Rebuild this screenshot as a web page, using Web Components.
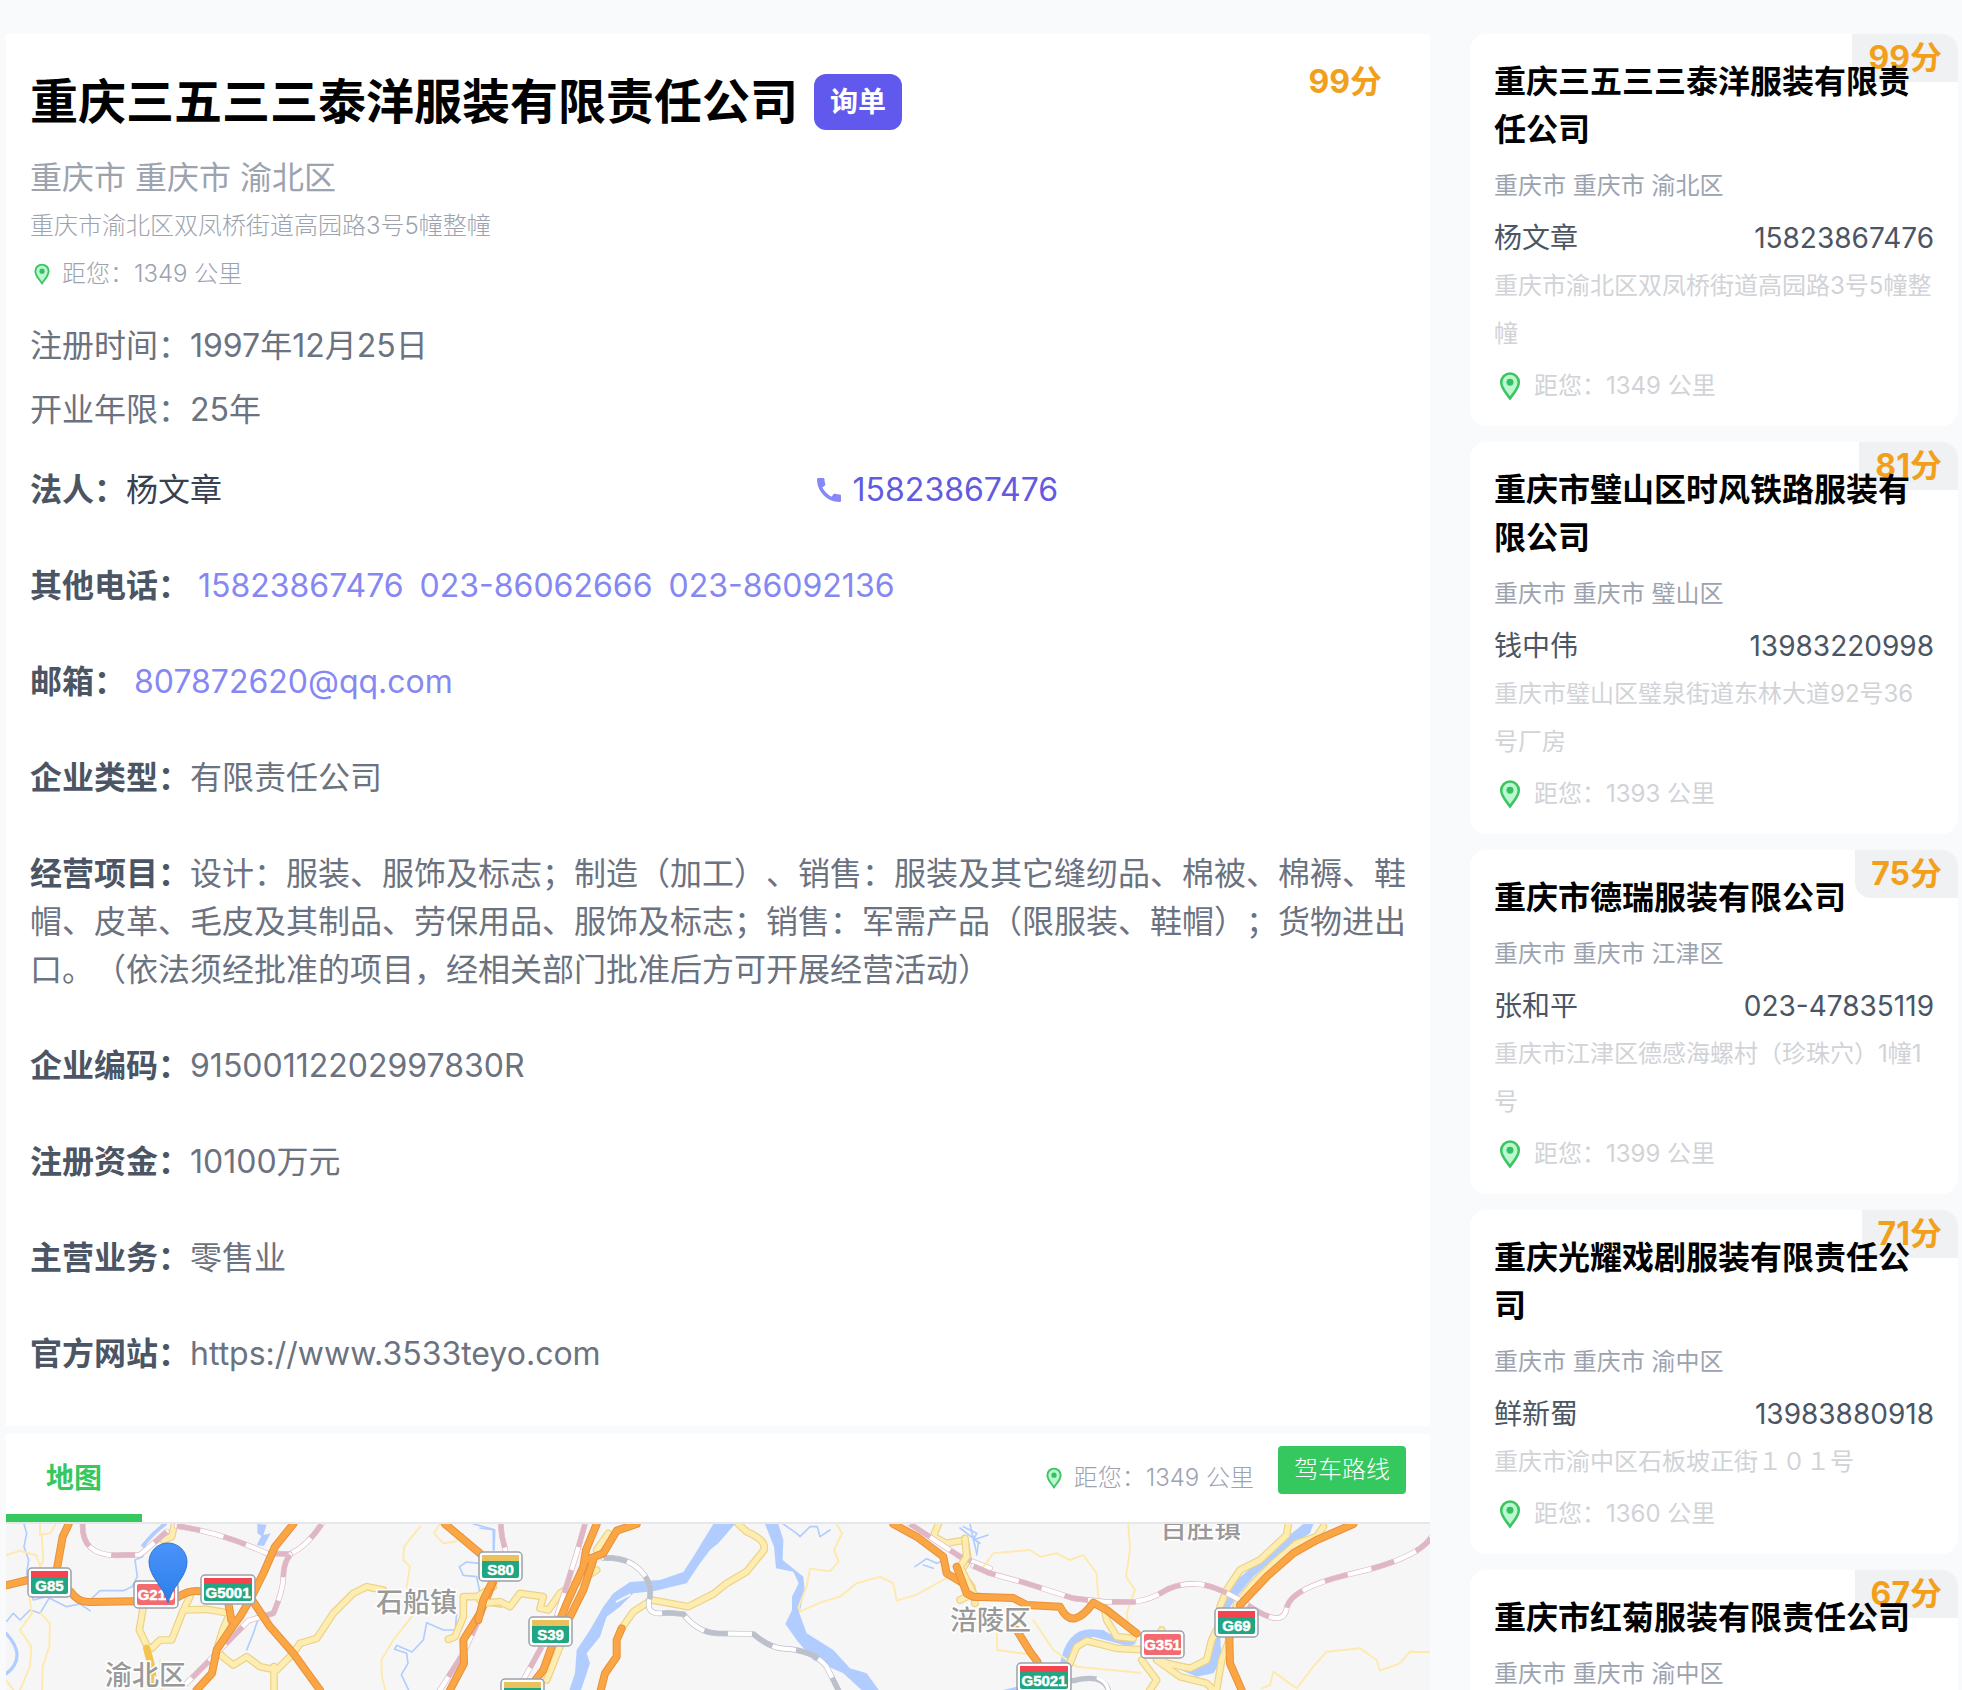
<!DOCTYPE html>
<html lang="zh-CN">
<head>
<meta charset="utf-8">
<meta name="viewport" content="width=device-width, initial-scale=1">
<title>重庆三五三三泰洋服装有限责任公司</title>
<style>
  body {
    margin: 0;
    background: #f9fafc;
    color: #6b7280;
    font-family: Inter, "Noto Sans CJK SC", sans-serif;
    font-size: 32px;
    line-height: 48px;
    text-spacing-trim: space-all;
  }
</style>
</head>
<body>
<app-layout>
  <company-panel slot="main" name="重庆三五三三泰洋服装有限责任公司" score="99" region="重庆市 重庆市 渝北区" address="重庆市渝北区双凤桥街道高园路3号5幢整幢" distance="1349">
    <span slot="facts">注册时间：1997年12月25日</span>
    <span slot="facts">开业年限：25年</span>
    <info-row label="法人" strong>杨文章<call-link slot="aside" number="15823867476"></call-link></info-row>
    <info-row label="其他电话" links><soft-link href="tel:15823867476">15823867476</soft-link><soft-link href="tel:023-86062666">023-86062666</soft-link><soft-link href="tel:023-86092136">023-86092136</soft-link></info-row>
    <info-row label="邮箱" links><soft-link href="mailto:807872620@qq.com">807872620@qq.com</soft-link></info-row>
    <info-row label="企业类型">有限责任公司</info-row>
    <info-row label="经营项目">设计：服装、服饰及标志；制造（加工）、销售：服装及其它缝纫品、棉被、棉褥、鞋帽、皮革、毛皮及其制品、劳保用品、服饰及标志；销售：军需产品（限服装、鞋帽）；货物进出口。（依法须经批准的项目，经相关部门批准后方可开展经营活动）</info-row>
    <info-row label="企业编码">91500112202997830R</info-row>
    <info-row label="注册资金">10100万元</info-row>
    <info-row label="主营业务">零售业</info-row>
    <info-row label="官方网站">https://www.3533teyo.com</info-row>
  </company-panel>
  <map-panel slot="main" distance="1349"></map-panel>

  <company-card slot="side" score="99" name="重庆三五三三泰洋服装有限责任公司" region="重庆市 重庆市 渝北区" person="杨文章" phone="15823867476" address="重庆市渝北区双凤桥街道高园路3号5幢整幢" distance="1349"></company-card>
  <company-card slot="side" score="81" name="重庆市璧山区时风铁路服装有限公司" region="重庆市 重庆市 璧山区" person="钱中伟" phone="13983220998" address="重庆市璧山区璧泉街道东林大道92号36号厂房" distance="1393"></company-card>
  <company-card slot="side" score="75" name="重庆市德瑞服装有限公司" region="重庆市 重庆市 江津区" person="张和平" phone="023-47835119" address="重庆市江津区德感海螺村（珍珠穴）1幢1号" distance="1399"></company-card>
  <company-card slot="side" score="71" name="重庆光耀戏剧服装有限责任公司" region="重庆市 重庆市 渝中区" person="鲜新蜀" phone="13983880918" address="重庆市渝中区石板坡正街１０１号" distance="1360"></company-card>
  <company-card slot="side" score="67" name="重庆市红菊服装有限责任公司" region="重庆市 重庆市 渝中区"></company-card>
</app-layout>

<script>
const define = (name, render) => customElements.define(name, class extends HTMLElement {
  connectedCallback() {
    if (this.shadowRoot) return;
    const tpl = document.createElement('template');
    tpl.innerHTML = render(key => this.getAttribute(key) || '', this);
    this.attachShadow({ mode: 'open' }).append(tpl.content.cloneNode(true));
  }
});

define('app-layout', () => `
  <style>
    :host { display: flex; align-items: flex-start; gap: 40px; height: 100vh; overflow: hidden; box-sizing: border-box; padding: 34px 4px 0 6px; }
    main { flex: 1; min-width: 0; display: flex; flex-direction: column; gap: 8px; }
    aside { flex: none; width: 488px; display: flex; flex-direction: column; gap: 16px; }
  </style>
  <main><slot name="main"></slot></main>
  <aside><slot name="side"></slot></aside>`);

define('pin-icon', () => `
  <style>:host { display: block; width: 24px; height: 24px; } svg { display: block; width: 100%; height: 100%; }</style>
  <svg viewBox="0 0 24 24" aria-hidden="true">
    <path d="M12 21.5C10.4 18.4 5.4 14.2 5.4 9.2a6.6 6.6 0 0 1 13.2 0c0 5-5 9.2-6.6 12.3z" fill="#bbf7d0" stroke="#3cc463" stroke-width="1.9" stroke-linejoin="round"/>
    <circle cx="12" cy="9.2" r="2.6" fill="#34c25f"/>
  </svg>`);

define('distance-tag', get => `
  <style>
    :host { display: flex; align-items: center; gap: 8px; font-size: 24px; }
    :host([large]) pin-icon { width: 32px; height: 32px; }
  </style>
  <pin-icon></pin-icon><span>距您：${get('km')} 公里</span>`);

define('soft-link', get => `
  <style>a { color: #8588f3; text-decoration: none; }</style>
  <a href="${get('href')}"><slot></slot></a>`);

define('call-link', get => `
  <style>
    a { display: flex; align-items: center; gap: 12px; color: #625ae0; text-decoration: none; }
    svg { width: 24px; height: 24px; fill: #8588f6; }
  </style>
  <a href="tel:${get('number')}"><svg viewBox="3 3 18 18" aria-hidden="true"><path d="M20.01 15.38c-1.23 0-2.42-.2-3.53-.56-.35-.12-.74-.03-1.01.24l-1.57 1.97c-2.83-1.35-5.48-3.9-6.89-6.83l1.95-1.66c.27-.28.35-.67.24-1.02-.37-1.11-.56-2.3-.56-3.53 0-.54-.45-.99-.99-.99H4.19C3.65 3 3 3.24 3 3.99 3 13.28 10.73 21 20.01 21c.71 0 .99-.63.99-1.18v-3.45c0-.54-.45-.99-.99-.99z"/></svg>${get('number')}</a>`);

define('info-row', (get, el) => `
  <style>
    :host { display: block; padding: 24px 0; margin-right: -4px; text-align: start; }
    b { color: #4b5563; font-weight: 700; }
    :host([strong]) { display: grid; grid-template-columns: 57% 1fr; color: #374151; }
    :host([links]) { display: flex; gap: 16px; }
    :host([links]) b { margin-right: -8px; }
  </style>
  ${el.hasAttribute('links') ? `<b>${get('label')}：</b><slot></slot>` : `<div><b>${get('label')}：</b><slot></slot></div><slot name="aside"></slot>`}`);

define('company-panel', get => `
  <style>
    :host { display: block; background: #fff; padding: 24px; }
    header { display: flex; justify-content: space-between; }
    .title { display: flex; align-items: center; gap: 16px; height: 88px; }
    h1 { margin: 0; font-size: 48px; line-height: 64px; font-weight: 700; color: #000; }
    button { font: inherit; font-size: 28px; line-height: 40px; font-weight: 700; color: #fff; background: #6159ee; border: 0; border-radius: 12px; padding: 8px 16px; }
    .score { padding-right: 24px; font-weight: 700; color: #f2a01c; }
    .region { margin-top: 8px; color: #9ca3af; }
    .address { font-size: 24px; font-weight: 300; color: #9ca3af; }
    distance-tag { font-weight: 300; color: #9ca3af; }
    .facts { display: grid; margin-top: 16px; line-height: 64px; }
  </style>
  <header>
    <div class="title"><h1>${get('name')}</h1><button type="button">询单</button></div>
    <div class="score">${get('score')}分</div>
  </header>
  <div class="region">${get('region')}</div>
  <div class="address">${get('address')}</div>
  <distance-tag km="${get('distance')}"></distance-tag>
  <div class="facts"><slot name="facts"></slot></div>
  <slot></slot>`);

define('company-card', get => `
  <style>
    :host { display: block; position: relative; background: #fff; border-radius: 16px; padding: 24px; }
    .score { position: absolute; top: 0; right: 0; padding: 0 16px; font-weight: 700; color: #f2a01c; background: #f0f1f3; border-radius: 0 16px 0 16px; }
    h2 { position: relative; margin: 0; font-size: 32px; font-weight: 700; color: #000; }
    .region { margin-top: 8px; font-size: 24px; color: #9ca3af; }
    .contact { display: flex; justify-content: space-between; margin: 8px 0 4px; font-size: 28px; line-height: 40px; color: #4b5563; }
    .contact a { color: inherit; text-decoration: none; }
    .address { font-size: 24px; color: #d1d3d7; }
    distance-tag { margin-top: 12px; line-height: 32px; color: #d1d3d7; }
  </style>
  <span class="score">${get('score')}分</span>
  <h2>${get('name')}</h2>
  <div class="region">${get('region')}</div>
  ${get('person') && `
  <div class="contact"><span>${get('person')}</span><a href="tel:${get('phone')}">${get('phone')}</a></div>
  <div class="address">${get('address')}</div>
  <distance-tag large km="${get('distance')}"></distance-tag>`}`);

define('map-panel', get => `
  <style>
    :host { display: block; background: #fff; }
    .bar { display: flex; align-items: stretch; height: 88px; padding-right: 24px; border-bottom: 2px solid #e5e7eb; }
    .tab { font: inherit; font-size: 28px; font-weight: 700; color: #34c85f; background: none; border: 0; border-bottom: 8px solid #34c85f; padding: 8px 40px 0; margin-right: auto; }
    distance-tag { font-weight: 300; color: #9ca3af; }
    .route { align-self: flex-start; margin: 12px 0 0 24px; font: inherit; font-size: 24px; font-weight: 300; line-height: 48px; color: #fff; background: #34c85f; border: 0; border-radius: 4px; padding: 0 16px; }
  </style>
  <div class="bar">
    <button class="tab" type="button">地图</button>
    <distance-tag km="${get('distance')}"></distance-tag>
    <button class="route" type="button">驾车路线</button>
  </div>
  <road-map></road-map>`);

const shield = (x, y, w, code, kind) => {
  const body = kind === 'national' ? '#f26b70' : '#22a583';
  const band = { express: '#f5444f', province: '#e9c25c' }[kind];
  return `<g>
    <rect x="${x + 1}" y="${y + 1}" width="${w - 2}" height="${kind === 'national' ? 27 : 29}" rx="4" fill="#fff" stroke="#9aa1ab" stroke-width="1.5"/>
    <rect x="${x + 4}" y="${y + 4}" width="${w - 8}" height="${kind === 'national' ? 21 : 23}" rx="2" fill="${body}"/>
    ${band ? `<rect x="${x + 4}" y="${y + 4}" width="${w - 8}" height="6" fill="${band}"/>` : ''}
    <text class="code" x="${x + w / 2}" y="${y + (kind === 'national' ? 20 : 24)}">${code}</text>
  </g>`;
};

const line = (kind, d) => ({
  orange: `<path d="${d}" stroke="#e98f3a" stroke-width="24"/><path d="${d}" stroke="#fba645" stroke-width="18"/>`,
  yellow: `<path d="${d}" stroke="#ecd187" stroke-width="23"/><path d="${d}" stroke="#feedb0" stroke-width="16"/>`,
  thin: `<path d="${d}" stroke="#feeaaf" stroke-width="6"/>`,
  water: `<path d="${d}" stroke="#b1cdff" stroke-width="5"/>`,
  rail: `<path d="${d}" stroke="#dfb7c4" stroke-width="17"/><path d="${d}" stroke="#fff" stroke-width="13"/><path d="${d}" stroke="#dfb7c4" stroke-width="15" stroke-dasharray="72 72" stroke-linecap="butt"/>`,
  grey: `<path d="${d}" stroke="#bcc0ca" stroke-width="17"/><path d="${d}" stroke="#fff" stroke-width="13"/><path d="${d}" stroke="#bcc0ca" stroke-width="15" stroke-dasharray="72 72" stroke-linecap="butt"/>`
})[kind];

/* Sheets are drawn on a grid three times finer than the map's own units. */
define('road-map', () => `
  <style>
    :host { display: block; background: #f6f6f6; }
    svg { display: block; width: 100%; height: auto; }
    .lines { fill: none; stroke-linejoin: round; stroke-linecap: round; }
    .code { font: 700 15px "Liberation Sans", sans-serif; fill: #fff; stroke: #fff; stroke-width: .5px; text-anchor: middle; }
    .place { font: 500 27px "Noto Sans CJK SC", sans-serif; fill: #999; stroke: #fff; stroke-width: 3px; paint-order: stroke; }
  </style>
  <svg viewBox="6 1524 1424 166" role="img" aria-label="地图">
    <defs>
      <linearGradient id="pin" x1="0" y1="0" x2="0" y2="1"><stop offset="0" stop-color="#4a93fb"/><stop offset="1" stop-color="#2b7fe8"/></linearGradient>
    </defs>
    <rect x="6" y="1524" width="1424" height="166" fill="#f6f6f6"/>

    <g class="lines" transform="translate(0 1400) scale(.333333)">
      ${line('water', 'M72 372L80 400 72 440 86 480 80 520 100 600 140 590 200 620 240 612 270 632M150 590L120 640 90 630 60 660 40 640 20 664M490 372L440 420 428 470 405 480 412 530 396 560 370 572 300 572 260 610M1420 372L1480 388 1480 450M1437 490L1400 486 1378 500 1390 526 1430 530 1440 580 1400 600M780 640L760 700 740 750M1370 640L1366 690 1330 690 1280 668 1270 720 1236 756 1190 736 1184 748 1220 760 1224 790 1204 824 1226 870')}
      <path d="M18 700Q84 770 18 822" stroke="#b1cdff" stroke-width="10"/>
      <path d="M495 372Q458 400 430 436" stroke="#b1cdff" stroke-width="12"/>
      <path d="M772 372L800 374 790 405 812 400 792 438 770 436 784 408 772 400z" fill="#b1cdff"/>
      ${line('thin', 'M18 466L60 452 108 466 122 500 96 530 88 590 96 640 60 690 94 740 90 800 60 870M122 640L150 670 148 740 128 800 126 870M120 372L120 404 150 400 165 376M125 404L130 480 112 520M450 490L460 530M1260 380L1212 440 1210 480 1230 500 1220 560 1240 600M1235 650L1180 720 1144 780 1146 830 1156 870M1320 372L1302 400 1330 430 1366 425 1390 400M480 780L485 870M18 840L40 870')}
      ${line('yellow', 'M524 372L515 410 490 420M430 620L418 690 442 740 455 745 480 720 515 720 550 630 620 628 690 640 668 690 650 750 668 770 700 795 740 770 780 800 830 810 880 760 900 730 950 715 1000 640 1060 580 1100 560 1150 570M555 620L570 590M822 800L822 870M1480 560L1430 590 1390 590 1390 650 1365 710 1345 718M1440 600L1500 612')}
      <path d="M440 745L455 800 460 850" stroke="#f4c44e" stroke-width="22"/>
      ${line('rail', 'M248 372Q244 466 350 466L420 464Q450 440 500 395')}
      ${line('rail', 'M530 378Q660 396 800 460L870 462Q920 440 965 372')}
      ${line('rail', 'M870 464Q850 490 850 530T820 640L745 662 650 760 560 850')}
      ${line('rail', 'M1445 640L1390 760 1320 870')}
      ${line('orange', 'M206 372L188 410 172 500M18 556L84 540M212 575Q234 608 270 606L400 604M536 590Q570 568 605 574M880 372L825 440 790 520 755 590 720 650 690 690 650 750 636 820 590 870M686 615L694 660M760 605L810 680 880 760 960 870M1335 372L1440 460M1480 545L1440 640 1390 720 1392 790 1350 870')}
    </g>

    <g class="lines" transform="translate(480 1500) scale(.333333)">
      ${line('water', 'M0 84L44 90 42 150M910 72L950 100 960 110 990 80 1012 80 1020 110 1050 90M1305 200L1340 176 1370 190 1395 180M1330 195L1360 205M1440 84L1500 130M1470 72L1490 160')}
      <path d="M700 72L765 72 715 130 690 150 660 190 620 250 520 274 460 280 420 320 380 350 360 410 320 460 330 490 300 580 265 580 285 520 290 450 330 390 370 320 400 280 450 246 540 240 610 216 640 170z" fill="#b1cdff"/>
      <path d="M410 305L450 284" stroke="#f6f6f6" stroke-width="6"/>
      <path d="M855 72L895 72 910 120 908 180 970 230 974 270 958 340 980 400 1060 450 1110 505 1160 520 1200 575 1150 575 1090 520 1000 480 950 420 916 372 936 330 936 290 956 250 940 215 888 205 882 140z" fill="#b1cdff"/>
      ${line('thin', 'M1070 72L1086 100 1062 150 1076 184 1050 214 990 206 980 260 956 320 960 335 1020 308 1080 290 1130 250 1200 230 1240 250 1250 302 1310 284 1400 234')}
      ${line('yellow', 'M385 100L350 150M350 210L240 280 205 330 180 325 190 290 120 280 90 320 60 305 10 310M240 440L200 540M775 72L800 95Q860 120 852 150L800 215 740 250 700 282 625 320 515 300 460 335 425 385M1375 72L1360 110 1400 130 1455 120 1465 180 1440 215 1475 260 1485 310')}
      ${line('rail', 'M62 72L66 110 76 150')}
      ${line('rail', 'M315 72L290 160 262 250 230 350M185 440L130 540')}
      ${line('rail', 'M1290 72L1440 170 1530 205')}
      ${line('grey', 'M370 174Q440 170 480 210T508 300 560 338L610 342Q650 396 710 400L820 402Q870 444 910 446 1000 450 1040 500L1080 580')}
      ${line('orange', 'M350 72L318 150 310 200 260 310 240 360M470 72L410 92 370 160 320 180M340 180L310 270 270 350M215 440L190 510 150 560M425 385L410 420 410 470 375 520 360 580M-5 360L10 300 35 250')}
      ${line('orange', 'M1240 72L1310 110 1390 170 1400 220 1450 250 1480 290 1500 290')}
    </g>

    <g class="lines" transform="translate(960 1400) scale(.333333)">
      ${line('water', 'M10 380L50 400 40 420 84 405M40 410L55 430 50 465')}
      <path d="M1030 372L1060 372 1050 400 960 460 880 530 830 590 805 630 780 700 785 780 760 820 710 830 640 800 620 778 700 800 750 780 775 690 785 620 830 540 900 480 970 420z" fill="#b1cdff"/>
      <path d="M300 790Q320 690 390 688L430 690 470 715 530 728 510 740 400 710 350 730 325 790z" fill="#b1cdff"/>
      <path d="M130 870L170 860 180 870z" fill="#b1cdff"/>
      ${line('thin', 'M70 500L100 460 210 450 240 470 290 460 330 480 370 465 410 520 415 600M505 372L510 450 498 530 525 570 500 640 510 700M110 690L112 750 220 765M220 660L280 750 350 800 540 818M905 865L930 855 940 815 1010 865 1060 800 1100 755 1200 745 1250 780 1260 812 1320 790 1350 755 1410 756')}
      ${line('yellow', 'M15 415L20 470 0 500 40 580 0 600M985 372L980 405 900 480 840 510 800 570 780 620 775 680 755 720 740 780 690 805 620 790 560 750 470 745 380 722 350 740 330 790M1090 380L1070 410 1010 430 940 490 880 550 830 610 815 700 785 780 770 870M430 610L440 660 470 710 520 715M545 780L590 840 570 870M590 780L660 830 740 850 760 870M600 700L605 690')}
      ${line('rail', 'M40 498L90 520 200 550 340 595 430 605 520 606Q570 600 610 575T710 552 870 620 980 625 1180 520 1412 414')}
      <path d="M340 842Q430 820 445 870" stroke="#bcc0ca" stroke-width="16"/>
      <path d="M415 835Q440 845 445 870" stroke="#fff" stroke-width="11"/>
      ${line('orange', 'M-10 500L20 580 40 590 160 594 200 615 300 620Q320 660 345 655T400 608L440 630 530 700M170 690L210 755 232 785M1180 372L1070 420 1000 460 920 530 840 615M808 712L810 790 845 870')}
    </g>

    <text class="place" x="376" y="1612">石船镇</text>
    <text class="place" x="105" y="1685">渝北区</text>
    <text class="place" x="950" y="1630">涪陵区</text>
    <text class="place" x="1160" y="1538">百胜镇</text>
    ${shield(27, 1567, 45, 'G85', 'express')}
    ${shield(133, 1580, 46, 'G210', 'national')}
    ${shield(200, 1574, 56, 'G5001', 'express')}
    ${shield(478, 1551, 45, 'S80', 'province')}
    ${shield(528, 1616, 45, 'S39', 'province')}
    ${shield(500, 1678, 45, '', 'province')}
    ${shield(1214, 1607, 45, 'G69', 'express')}
    ${shield(1140, 1630, 45, 'G351', 'national')}
    ${shield(1016, 1662, 56, 'G5021', 'express')}
    <path d="M168 1603C165 1588 149 1577 149 1562a19 19 0 0 1 38 0C187 1577 171 1588 168 1603z" fill="url(#pin)" stroke="#2f76d6" stroke-width="1"/>
  </svg>`);
</script>
</body>
</html>
